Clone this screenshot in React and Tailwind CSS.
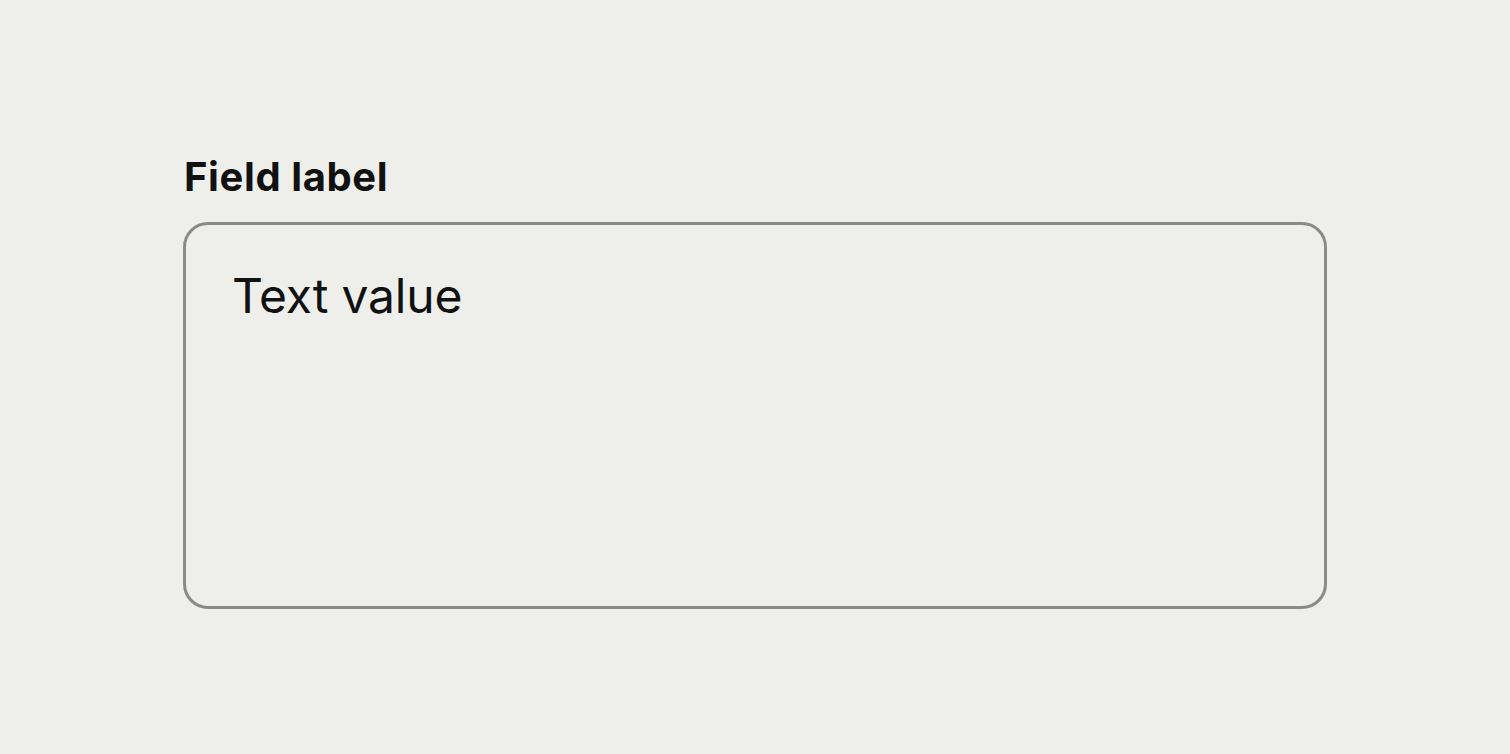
import React from 'react';

// Single multiline text field with a bold label above it
export default function App() {
  return (
    <div
      className="min-h-screen w-full bg-[#eeefea] px-[183px] pt-[153px]"
      style={{ fontFamily: 'Inter, "Liberation Sans", sans-serif' }}
    >
      <label className="flex flex-col gap-[21px]">
        <span className="pl-px text-[40px] leading-[48px] font-bold tracking-[0.6px] text-[#111111]">
          Field label
        </span>
        <textarea
          defaultValue="Text value"
          className="h-[387px] w-full resize-none rounded-[25px] border-[3px] border-[#8a8b86] bg-transparent px-[46px] pt-[42px] text-[48px] leading-[58px] tracking-[-0.2px] text-[#111111] outline-none"
          style={{ fontFamily: 'Inter, "Liberation Sans", sans-serif' }}
        />
      </label>
    </div>
  );
}
